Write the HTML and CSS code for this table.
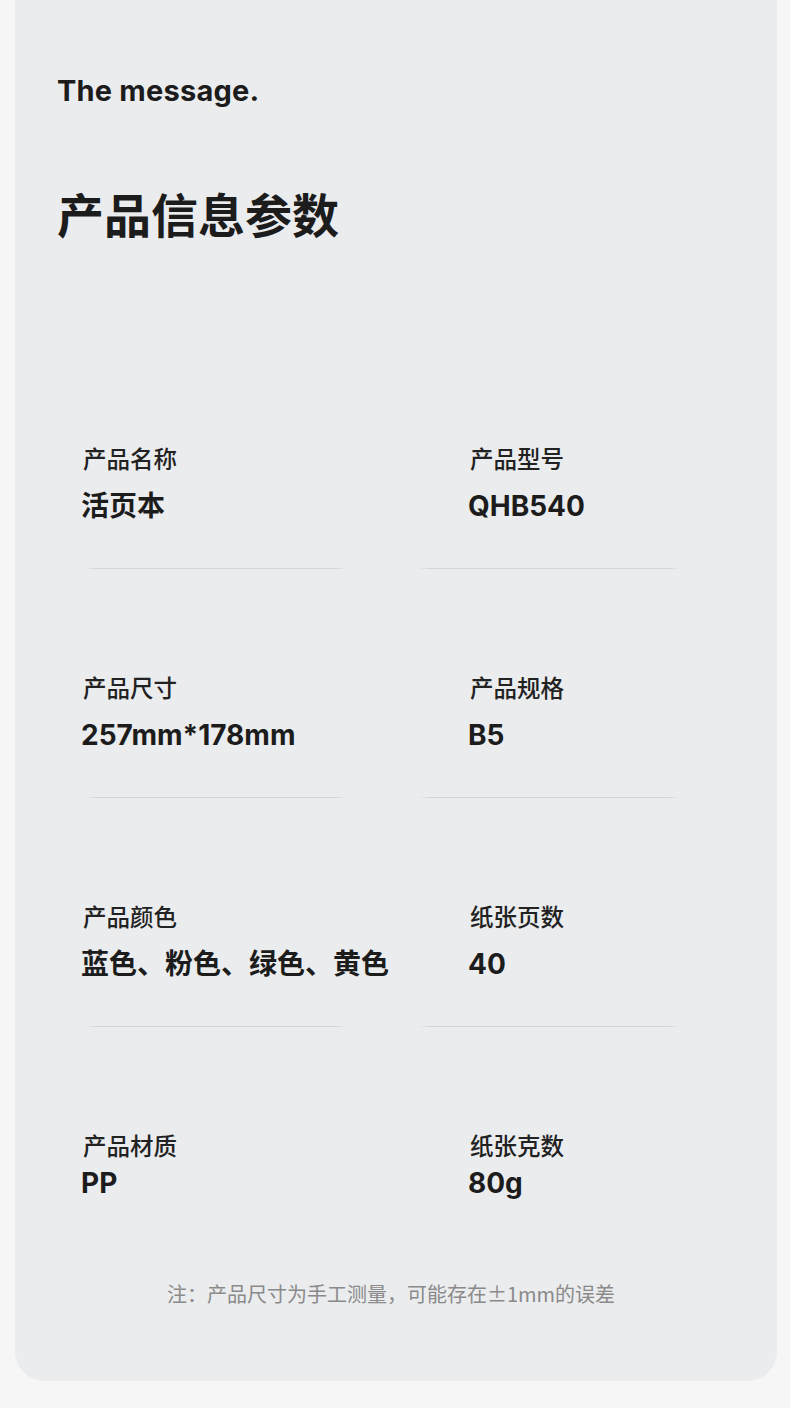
FILE: index.html
```html
<!DOCTYPE html>
<html lang="zh-CN">
<head>
<meta charset="utf-8">
<title>产品信息参数</title>
<link rel="stylesheet" href="styles.css">
</head>
<body>
<main class="card">
  <p class="eyebrow">The message.</p>
  <h1 class="title">产品信息参数</h1>

  <section class="specs">
    <div class="row">
      <div class="cell"><div class="label">产品名称</div><div class="value">活页本</div></div>
      <div class="cell"><div class="label">产品型号</div><div class="value">QHB540</div></div>
    </div>
    <div class="divider"><span></span><span></span></div>

    <div class="row">
      <div class="cell"><div class="label">产品尺寸</div><div class="value">257mm*178mm</div></div>
      <div class="cell"><div class="label">产品规格</div><div class="value">B5</div></div>
    </div>
    <div class="divider"><span></span><span></span></div>

    <div class="row">
      <div class="cell"><div class="label">产品颜色</div><div class="value">蓝色、粉色、绿色、黄色</div></div>
      <div class="cell"><div class="label">纸张页数</div><div class="value">40</div></div>
    </div>
    <div class="divider"><span></span><span></span></div>

    <div class="row row-last">
      <div class="cell"><div class="label">产品材质</div><div class="value">PP</div></div>
      <div class="cell"><div class="label">纸张克数</div><div class="value">80g</div></div>
    </div>
  </section>

  <p class="note">注：产品尺寸为手工测量，可能存在±1mm的误差</p>
</main>
</body>
</html>
```
FILE: styles.css
```css
html, body {
  margin: 0;
  padding: 0;
}

body {
  background: #f6f6f6;
  font-family: "Inter", "Noto Sans CJK SC", sans-serif;
  color: #1e1e1e;
}

.card {
  box-sizing: border-box;
  margin-left: 15px;
  width: 762px;
  height: 1381px;
  background: #ebecee;
  border-radius: 0 0 30px 30px;
  padding: 71px 0 0 42px;
}

.eyebrow {
  margin: 0;
  font-size: 29px;
  line-height: 40px;
  font-weight: 700;
  letter-spacing: 0.2px;
  color: #1c1c1c;
}

.title {
  margin: 72px 0 0 0;
  font-family: "Noto Sans CJK SC", sans-serif;
  font-size: 47px;
  line-height: 60px;
  font-weight: 700;
  color: #1c1c1c;
}

.specs {
  margin: 200px 0 0 26px;
}

.row {
  display: grid;
  grid-template-columns: 387px 1fr;
}

.row + .divider {
  margin-top: 32px;
}

.divider {
  display: flex;
  gap: 71px;
  padding-left: 1px;
  margin-bottom: 103px;
}

.divider span {
  display: block;
  width: 263px;
  height: 1px;
  background: linear-gradient(90deg, rgba(212,212,215,0) 0%, #d4d4d7 5%, #d4d4d7 95%, rgba(212,212,215,0) 100%);
}

.label {
  font-family: "Noto Sans CJK SC", sans-serif;
  font-size: 23.5px;
  line-height: 30px;
  font-weight: 500;
  color: #222;
}

.value {
  margin: 3px 0 0 -2px;
  font-size: 28px;
  line-height: 60px;
  font-weight: 700;
  color: #1c1c1c;
}

.row-last .value {
  margin-top: 0;
  line-height: 46px;
}

.note {
  margin: 73px 0 0 -42px;
  padding-right: 10px;
  box-sizing: border-box;
  width: 762px;
  text-align: center;
  font-family: "Noto Sans CJK SC", sans-serif;
  font-size: 20px;
  line-height: 30px;
  font-weight: 400;
  color: #8a8a8a;
}
```
